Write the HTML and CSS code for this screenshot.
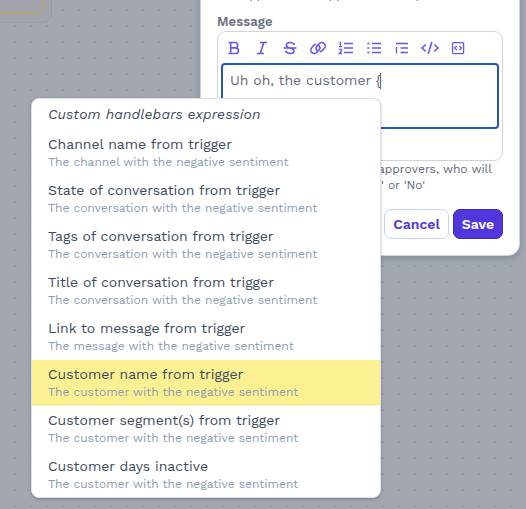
FILE: index.html
```
<!DOCTYPE html>
<html lang="en">
<head>
<meta charset="utf-8">
<title>Workflow message</title>
<link rel="stylesheet" href="styles.css">
</head>
<body>
<main class="canvas">
  <div class="node"><div class="node-inner"></div></div>
  <section class="dialog">
    <p class="hint hint-top">The approver will appear for a step</p>
    <label class="label">Message</label>
    <div class="editor">
      <div class="toolbar">
        <svg viewBox="0 0 16 16"><path d="M2.500 2.500H9a2.700 2.700 0 0 1 0 5.400H4.700M9 7.900h.6a2.800 2.800 0 0 1 0 5.600H2.500M4.700 2.500v11"/></svg>
        <svg viewBox="0 0 16 16"><path d="M6 2.500h7M3 13.500h7M9.800 2.500l-3.600 11"/></svg>
        <svg viewBox="0 0 16 16"><path d="M1.500 8h13M12 5V3.200M12 4.200C11 3 9.600 2.500 8 2.500c-2.200 0-3.600 1-3.600 2.700C4.400 7 6 7.500 8 8s4 1 4 2.800c0 1.700-1.600 2.700-3.800 2.700-1.800 0-3.200-.6-4.200-1.900M4 13v-2.200"/></svg>
        <svg class="link" viewBox="0 0 18 16"><path d="M8.300 10.700a3.400 3.400 0 0 1-.3-4.700l2-2.300a3.500 3.500 0 0 1 5.300 4.600l-2 2.300c-.7.8-1.500 1.100-2.500 1.100M9.700 5.300a3.400 3.400 0 0 1 .3 4.700l-2 2.300a3.500 3.500 0 0 1-5.300-4.600l2-2.300c.7-.8 1.500-1.100 2.500-1.100"/></svg>
        <svg viewBox="0 0 16 16"><path d="M6 3.500h9M6 8h9M6 12.500h9"/><path class="thin" d="M1.500 2.500h1V6.500M1 6.600h3M1.200 9.500h2.300v1.300L1.200 13.500h2.600"/></svg>
        <svg viewBox="0 0 16 16"><path d="M6 3.500h9M6 8h9M6 12.500h9M1.300 3.500h2.200M1.300 8h2.200M1.300 12.500h2.200"/></svg>
        <svg viewBox="0 0 16 16"><path class="thin" d="M2 3.500h12M6.500 8H14M6.500 12.500H14M2.500 7v6.500"/></svg>
        <svg class="code" viewBox="0 0 18 16"><path d="M4.800 4.500 1 8l3.800 3.500M13.200 4.500 17 8l-3.800 3.500M10.800 2 7.200 14"/></svg>
        <svg viewBox="0 0 16 16"><rect class="thin" x="2.600" y="2.600" width="11" height="11" rx="1"/><path class="thin" d="M6.800 6 4.800 8l2 2M9.400 6l2 2-2 2"/></svg>
      </div>
      <div class="input">Uh oh, the customer {<span class="caret"></span></div>
    </div>
    <p class="hint first">approvers, who will</p>
    <p class="hint second">' or 'No'</p>
    <div class="actions"><button class="button cancel">Cancel</button><button class="button save">Save</button></div>
  </section>
  <ul class="menu">
    <li class="custom">Custom handlebars expression</li>
    <li class="option"><b>Channel name from trigger</b><small>The channel with the negative sentiment</small></li>
    <li class="option"><b>State of conversation from trigger</b><small>The conversation with the negative sentiment</small></li>
    <li class="option"><b>Tags of conversation from trigger</b><small>The conversation with the negative sentiment</small></li>
    <li class="option"><b>Title of conversation from trigger</b><small>The conversation with the negative sentiment</small></li>
    <li class="option"><b>Link to message from trigger</b><small>The message with the negative sentiment</small></li>
    <li class="option selected"><b>Customer name from trigger</b><small>The customer with the negative sentiment</small></li>
    <li class="option"><b>Customer segment(s) from trigger</b><small>The customer with the negative sentiment</small></li>
    <li class="option"><b>Customer days inactive</b><small>The customer with the negative sentiment</small></li>
  </ul>
</main>
</body>
</html>
```
FILE: styles.css
```
* { box-sizing: border-box; }
body { margin: 0; font-family: "Work Sans", Inter, sans-serif; }
p, ul { margin: 0; padding: 0; list-style: none; }
.canvas {
  position: relative;
  width: 526px;
  height: 509px;
  overflow: hidden;
  background: #a2a7b0 conic-gradient(from 90deg at 14px 14px, #959ba8 90deg, transparent 0) 0 -5px / 16px 16px;
}
.node {
  position: absolute;
  left: -60px;
  top: -60px;
  width: 112px;
  height: 83px;
  padding: 0 8px 8px 0;
  border: 1px solid #979ca9;
  border-radius: 10px;
  background: #a2a5ae;
}
.node-inner { height: 73px; border: 1px solid #c2a63c; border-radius: 6px; }
.dialog {
  position: absolute;
  left: 200px;
  top: -20px;
  width: 320px;
  height: 276px;
  padding: 6px 16px;
  border: 1px solid #cbd5e1;
  border-radius: 12px;
  background: #fff;
  box-shadow: 0 3px 6px rgba(30, 41, 59, .2);
}
.hint { font-size: 12px; line-height: 16px; color: #5b6a80; white-space: nowrap; }
.hint-top { height: 26px; }
.label { display: block; height: 18px; font-size: 13px; line-height: 18px; font-weight: 600; color: #6b7280; letter-spacing: .1px; }
.editor { height: 130px; padding: 0 3px; border: 1px solid #cbd5e1; border-radius: 9px; }
.toolbar { display: flex; align-items: center; gap: 12px; height: 31px; padding: 1px 0 0 5px; }
.toolbar svg { width: 16px; height: 16px; flex: none; fill: none; stroke: #6558e8; stroke-width: 1.6; overflow: visible; }
.toolbar .link, .toolbar .code { width: 18px; margin: 0 -1px; }
.toolbar .thin { stroke-width: 1.3; }
.input { height: 66px; padding: 6px 7px; border: 2px solid #2454c6; border-radius: 4px; font-size: 14px; line-height: 18px; color: #646b79; }
.caret { display: inline-block; width: 1px; height: 16px; margin-left: -1px; background: #5b6370; vertical-align: -4px; }
.first { padding-left: 161px; }
.second { padding-left: 164px; }
.actions { display: flex; justify-content: flex-end; gap: 4px; margin-top: 16px; }
.button { height: 30px; padding: 0; border-radius: 7px; font: 600 14px "Work Sans", Inter, sans-serif; }
.cancel { width: 65px; border: 1px solid #c7d2fe; background: #fff; color: #5136dc; }
.save { width: 50px; border: 1px solid #4028b0; background: #5136dc; color: #fff; }
.menu {
  position: absolute;
  left: 31px;
  top: 98px;
  width: 350px;
  height: 400px;
  overflow: hidden;
  border: 1px solid #dfe1e5;
  border-radius: 8px;
  background: #fff;
  box-shadow: 0 1px 3px rgba(30, 41, 59, .3);
  color: #3d4a60;
}
.custom { height: 31px; padding: 5px 16px; font-size: 14px; line-height: 20px; font-style: italic; letter-spacing: .15px; }
.option { height: 45px; margin-bottom: 1px; padding: 4px 16px; }
.option b { display: block; font-size: 14px; line-height: 20px; font-weight: 400; }
.option small { display: block; font-size: 12px; line-height: 16px; color: #8b9bb3; }
.selected { background: #fbf193; border-bottom: 1px solid #fbe252; }
```
